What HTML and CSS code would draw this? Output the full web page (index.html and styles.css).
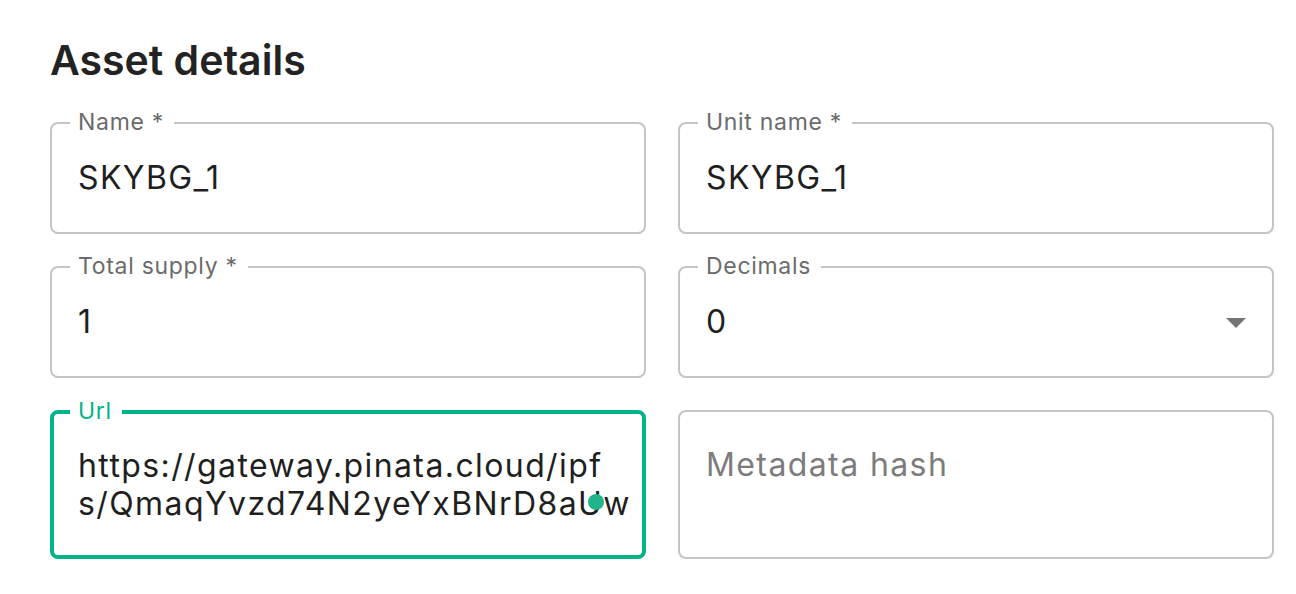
FILE: index.html
```html
<!DOCTYPE html>
<html lang="en">
<head>
<meta charset="utf-8">
<title>Asset details</title>
<link rel="stylesheet" href="styles.css">
</head>
<body>
<main class="page">
  <h2 class="title">Asset details</h2>
  <div class="grid">
    <div class="field">
      <span class="label">Name *</span>
      <span class="value">SKYBG_1</span>
    </div>
    <div class="field">
      <span class="label">Unit name *</span>
      <span class="value">SKYBG_1</span>
    </div>
    <div class="field">
      <span class="label">Total supply *</span>
      <span class="value">1</span>
    </div>
    <div class="field select">
      <span class="label">Decimals</span>
      <span class="value">0</span>
      <svg class="arrow" width="20" height="10" viewBox="0 0 20 10"><path d="M0 0h20L10 10z" fill="#757575"/></svg>
    </div>
    <div class="field multi focused">
      <span class="label">Url</span>
      <div class="value lines">
        <span class="line">https://gateway.pinata.cloud/ipf</span>
        <span class="line">s/QmaqYvzd74N2yeYxBNrD8aUw</span>
      </div>
      <span class="dot"></span>
    </div>
    <div class="field multi">
      <span class="value placeholder">Metadata hash</span>
    </div>
  </div>
</main>
</body>
</html>
```
FILE: styles.css
```css
* { box-sizing: border-box; }
html, body { margin: 0; padding: 0; background: #fff; }
body { font-family: "Inter", "DejaVu Sans", sans-serif; color: #212121; }
.page { padding: 34px 0 0 50px; }
.title {
  margin: 0;
  font-size: 41px;
  line-height: 52px;
  font-weight: 600;
  color: #232323;
}
.grid {
  margin-top: 36px;
  display: grid;
  grid-template-columns: 596px 596px;
  grid-template-rows: 112px 112px 149px;
  column-gap: 32px;
  row-gap: 32px;
}
.field {
  position: relative;
  border: 2px solid #c4c4c4;
  border-radius: 8px;
  display: flex;
  align-items: center;
  padding: 0 26px;
}
.label {
  position: absolute;
  left: 18px;
  top: -15px;
  padding: 0 10px 0 8px;
  background: #fff;
  font-size: 23px;
  line-height: 26px;
  letter-spacing: 0.7px;
  color: #6b6b6b;
}
.value {
  font-size: 32px;
  line-height: 38px;
  letter-spacing: 1.4px;
  color: #1f1f1f;
  white-space: nowrap;
}
.select .value { flex: 1; }
.arrow { flex: none; margin-top: 2px; }
.multi { align-items: flex-start; padding-top: 34px; }
.focused { border: 4px solid #00b388; padding-left: 24px; padding-right: 12px; padding-top: 33px; }
.focused .label { color: #00b388; left: 16px; top: -16px; }
.lines {
  display: flex;
  flex-direction: column;
  line-height: 38px;
  min-width: 0;
  flex: 1;
}
.placeholder { color: #7c7c7c; }
.dot {
  position: absolute;
  left: 534px;
  top: 80px;
  width: 16px;
  height: 16px;
  border-radius: 50%;
  background: #1fb48c;
}
```
